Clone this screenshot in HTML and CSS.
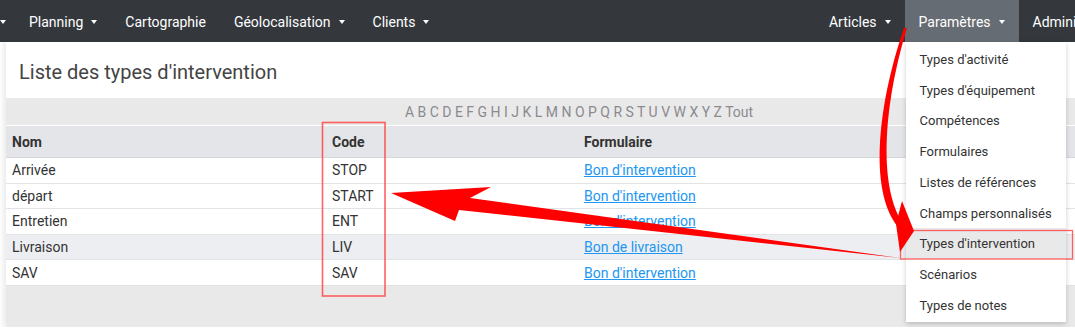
FILE: index.html
```html
<!DOCTYPE html>
<html lang="fr">
<head>
  <meta charset="UTF-8">
  <title>Liste des types d'intervention</title>
  <link rel="stylesheet" href="styles.css">
</head>
<body>

<div id="page">
  <!-- Top navigation -->
  <div id="navbar">
    <ul class="nav-list">
      <li class="nav-item nav-cut has-menu"></li>
      <li class="nav-item has-menu">Planning</li>
      <li class="nav-item">Cartographie</li>
      <li class="nav-item has-menu">Géolocalisation</li>
      <li class="nav-item has-menu">Clients</li>
    </ul>
    <ul class="nav-list">
      <li class="nav-item has-menu">Articles</li>
      <li class="nav-item has-menu open">Paramètres
        <ul class="dropdown">
          <li>Types d'activité</li>
          <li>Types d'équipement</li>
          <li>Compétences</li>
          <li>Formulaires</li>
          <li>Listes de références</li>
          <li>Champs personnalisés</li>
          <li class="selected">Types d'intervention</li>
          <li>Scénarios</li>
          <li>Types de notes</li>
        </ul>
      </li>
      <li class="nav-item has-menu">Administration</li>
    </ul>
  </div>

  <!-- Content card -->
  <div id="card">
    <div class="card-title">Liste des types d'intervention</div>

    <div class="alphabet">A B C D E F G H I J K L M N O P Q R S T U V W X Y Z Tout</div>

    <table class="list">
      <thead>
        <tr>
          <th class="col-nom">Nom</th>
          <th class="col-code">Code</th>
          <th>Formulaire</th>
        </tr>
      </thead>
      <tbody>
        <tr><td>Arrivée</td><td>STOP</td><td><a href="#">Bon d'intervention</a></td></tr>
        <tr><td>départ</td><td>START</td><td><a href="#">Bon d'intervention</a></td></tr>
        <tr><td>Entretien</td><td>ENT</td><td><a href="#">Bon d'intervention</a></td></tr>
        <tr class="hover"><td>Livraison</td><td>LIV</td><td><a href="#">Bon de livraison</a></td></tr>
        <tr><td>SAV</td><td>SAV</td><td><a href="#">Bon d'intervention</a></td></tr>
      </tbody>
    </table>

    <div class="card-footer"></div>
  </div>
</div>

<!-- Annotations drawn over the screenshot -->
<svg id="annotations" width="1075" height="330" viewBox="0 0 1075 330">
  <rect x="322.5" y="122.5" width="62.5" height="173.5" fill="none" stroke="#ff3b3b" stroke-opacity="0.8" stroke-width="1.6"/>
  <rect x="900.5" y="230.5" width="172" height="28.5" fill="none" stroke="#ff3b3b" stroke-opacity="0.8" stroke-width="1.3"/>
  <polygon points="391,193 491,187 470,198 900,258 459,210 455,221" fill="#ff0000"/>
  <path d="M904 28 C876 110, 869 196, 900 229 L904 225 C879 190, 882 110, 907 28 Z" fill="#ff0000"/>
  <polygon points="902,201 914,231 900,252 896,224" fill="#ff0000"/>
</svg>

</body>
</html>
```

FILE: styles.css
```css
body {
  margin: 0;
  overflow: hidden;
  background-color: #ffffff;
  font-family: Roboto, "Liberation Sans", Arial, sans-serif;
  font-size: 14px;
  color: #333;
}

#page {
  width: 1152px;
}

/* Navbar */

#navbar {
  height: 42px;
  background-color: #34383d;
  display: flex;
  justify-content: space-between;
}

.nav-list {
  list-style: none;
  margin: 0;
  padding: 0;
  display: flex;
}

.nav-item {
  position: relative;
  display: flex;
  align-items: center;
  padding: 2px 14px 0;
  color: #ffffff;
  white-space: nowrap;
}

.nav-item.has-menu::after {
  content: "";
  display: inline-block;
  margin-left: 8px;
  border-left: 3.5px solid transparent;
  border-right: 3.5px solid transparent;
  border-top: 4px solid #ffffff;
}

.nav-item.nav-cut {
  padding: 2px 9px 0 0;
}

.nav-item.nav-cut::after {
  margin-left: 0;
}

.nav-item.open {
  background-color: #666c73;
}

.dropdown {
  position: absolute;
  top: 42px;
  left: 1px;
  width: 160px;
  margin: 0;
  padding: 2px 0;
  list-style: none;
  background-color: #ffffff;
  box-shadow: 0 2px 5px rgba(0, 0, 0, 0.2);
  z-index: 10;
}

.dropdown li {
  padding: 1px 14px 0;
  line-height: 29.7px;
  font-size: 13px;
  color: #333;
}

.dropdown li.selected {
  background-color: #e9e9e9;
}

/* Card */

#card {
  margin-left: 6px;
  box-shadow: -3px 0 5px rgba(0, 0, 0, 0.08);
}

.card-title {
  height: 52px;
  padding: 4px 0 0 13px;
  display: flex;
  align-items: center;
  font-size: 20px;
  color: #444;
}

.alphabet {
  height: 25px;
  padding-top: 2px;
  line-height: 25px;
  background-color: #e9e9e9;
  border-bottom: 1px solid #ffffff;
  text-align: center;
  color: #8a8a8f;
  font-size: 14px;
}

.list {
  width: 100%;
  border-collapse: collapse;
}

.list th {
  height: 31px;
  padding: 0 6px;
  text-align: left;
  font-weight: bold;
  background-color: #e4e5e8;
  border-bottom: 1px solid #d6d7da;
}

.list td {
  height: 24.6px;
  padding: 0 6px;
  border-bottom: 1px solid #e2e3e5;
}

.list .col-nom {
  width: 308px;
}

.list .col-code {
  width: 240px;
}

.list tr.hover td {
  background-color: #eceef1;
}

.list a {
  color: #2196f3;
}

.card-footer {
  height: 41px;
  background-color: #e9e9e9;
}

#annotations {
  position: absolute;
  top: 0;
  left: 0;
  pointer-events: none;
  z-index: 20;
}
```
